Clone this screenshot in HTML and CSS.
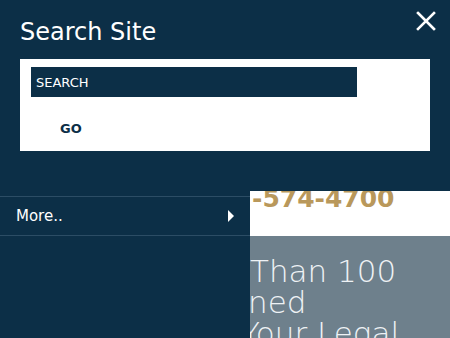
FILE: index.html
```
<!DOCTYPE html>
<html lang="en">
<head>
    <meta charset="UTF-8">
    <meta name="viewport" content="width=device-width, initial-scale=1.0">
    <title>Search Site</title>
    <link rel="stylesheet" href="styles.css">
</head>
<body>
    <div class="search-panel">
        <div class="search-head">
            <h2>Search Site</h2>
            <button type="button" class="close-btn" aria-label="Close">
                <svg width="20" height="20" viewBox="0 0 20 20">
                    <path d="M2 2 L18 18 M18 2 L2 18" stroke="#fff" stroke-width="2.6" stroke-linecap="square"/>
                </svg>
            </button>
        </div>
        <form class="search-box">
            <input type="text" class="search-input" placeholder="SEARCH">
            <button type="button" class="go-btn">GO</button>
        </form>
    </div>

    <div class="lower">
        <nav class="side-menu">
            <a href="#" class="menu-item">
                <span>More..</span>
                <span class="arrow"></span>
            </a>
        </nav>
        <div class="page">
            <div class="phone-bar">
                <span class="phone">-574-4700</span>
            </div>
            <div class="hero">
                <p class="hero-line first">Than 100</p>
                <p class="hero-line">ned</p>
                <p class="hero-line last">Your Legal</p>
            </div>
        </div>
    </div>
</body>
</html>
```
FILE: styles.css
```
html, body {
    margin: 0;
    padding: 0;
}
body {
    width: 450px;
    height: 338px;
    overflow: hidden;
    background: #0c2f47;
    font-family: "DejaVu Sans", sans-serif;
    color: #fff;
}
.search-panel {
    height: 191px;
    padding: 0 20px;
    box-sizing: border-box;
}
.search-head {
    display: flex;
    justify-content: space-between;
    align-items: flex-start;
    padding-top: 18px;
}
.search-head h2 {
    margin: 0;
    font-size: 24px;
    font-weight: normal;
    line-height: 28px;
}
.close-btn {
    background: none;
    border: 0;
    padding: 0;
    margin: -7px -6px 0 0;
    width: 20px;
    height: 20px;
    cursor: pointer;
}
.close-btn svg {
    display: block;
}
.search-box {
    margin-top: 13px;
    background: #fff;
    height: 92px;
    padding: 8px 11px 0;
    box-sizing: border-box;
}
.search-input {
    display: block;
    width: 326px;
    height: 30px;
    box-sizing: border-box;
    border: 0;
    padding: 0 5px;
    background: #0c2f47;
    color: #fff;
    font-family: "DejaVu Sans", sans-serif;
    font-size: 13px;
    outline: none;
}
.search-input::placeholder {
    color: #fff;
    opacity: 1;
}
.go-btn {
    display: block;
    margin: 24px 0 0 29px;
    padding: 0;
    border: 0;
    background: none;
    font-family: "DejaVu Sans", sans-serif;
    font-weight: bold;
    font-size: 13px;
    color: #0c2f47;
    cursor: pointer;
}
.lower {
    display: grid;
    grid-template-columns: 250px 1fr;
    height: 147px;
}
.side-menu {
    padding-top: 5px;
}
.menu-item {
    display: flex;
    justify-content: space-between;
    align-items: center;
    height: 38px;
    padding: 0 16px;
    border-top: 1px solid #2c4d65;
    border-bottom: 1px solid #2c4d65;
    color: #fff;
    text-decoration: none;
    font-size: 15px;
}
.arrow {
    width: 0;
    height: 0;
    border-top: 6px solid transparent;
    border-bottom: 6px solid transparent;
    border-left: 6px solid #fff;
}
.page {
    overflow: hidden;
}
.phone-bar {
    height: 45px;
    background: #fff;
    overflow: hidden;
}
.phone {
    display: block;
    margin-top: -5px;
    padding-left: 2px;
    font-size: 25px;
    font-weight: bold;
    line-height: 26px;
    color: #b9985b;
}
.hero {
    height: 102px;
    background: #6e808c;
    padding-top: 20px;
    box-sizing: border-box;
    overflow: hidden;
}
.hero-line {
    margin: 0 0 0 -2px;
    font-size: 31px;
    font-weight: 200;
    line-height: 31px;
    white-space: nowrap;
    color: #eef2f5;
}
.hero-line.first {
    margin-left: 0;
}
.hero-line.last {
    margin-left: -9px;
}
```
